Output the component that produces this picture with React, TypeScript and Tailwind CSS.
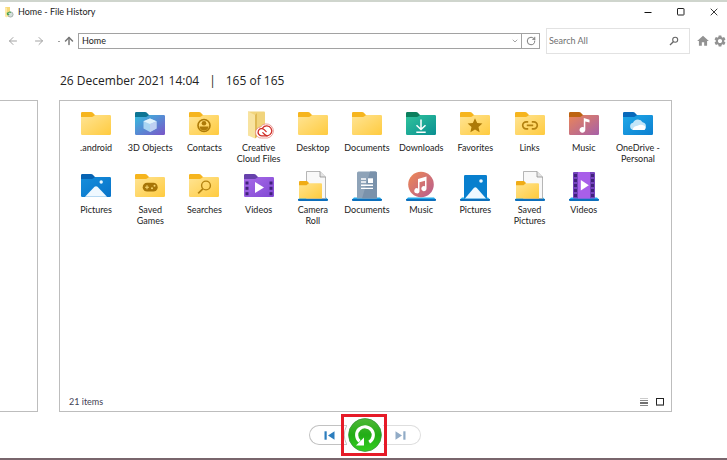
import type { ReactNode } from 'react'
import { ArrowLeft, ArrowRight, ArrowUp, ChevronDown, RotateCw } from 'lucide-react';
import { MdHome, MdSettings } from 'react-icons/md';

type HistoryItem = {
  label: string;
  icon: ReactNode;
}

type FolderProps = {
  tab?: string;
  from?: string;
  to?: string;
  id: string;
  children?: ReactNode;
}

const Folder = (props: FolderProps) => {
  const { id, tab = '#f6b51e', from = '#ffe494', to = '#ffcb3f', children } = props

  return (
    <svg viewBox="0 0 32 32" className="h-8 w-8" aria-hidden="true">
      <defs>
        <linearGradient id={id} x1="0" y1="0" x2="1" y2="1">
          <stop offset="0" stopColor={from} />
          <stop offset="1" stopColor={to} />
        </linearGradient>
      </defs>
      <path d="M1 13V5.2Q1 4 2.2 4H11.2Q12 4 12.6 4.6L15 7H30V13Z" fill={tab} />
      <path d="M1 9H11.8Q12.8 9 13.5 8.2L14.4 7.4Q15 7 15.8 7H29.8Q31 7 31 8.2V25.8Q31 27 29.8 27H2.2Q1 27 1 25.8Z" fill={`url(#${id})`} />
      {children}
    </svg>
  )
}

const LibraryBase = ({ children }: { children: ReactNode }) => (
  <svg viewBox="0 0 32 32" className="h-8 w-8" aria-hidden="true">
    <path d="M3 27.5H29L31 29.5H1Z" fill="#22a7e8" />
    <path d="M1 29H31V30.2Q31 31 30 31H2Q1 31 1 30.2Z" fill="#0d6fbc" />
    {children}
  </svg>
)

const PaperFolder = ({ id }: { id: string }) => (
  <LibraryBase>
    <defs>
      <linearGradient id={id} x1="0" y1="0" x2="1" y2="1">
        <stop offset="0" stopColor="#ffe48f" />
        <stop offset="1" stopColor="#ffca3d" />
      </linearGradient>
    </defs>
    <path d="M9.5 1.5H23L28.5 7V28.5H9.5Z" fill="#f8f8f8" stroke="#a5a5a5" strokeWidth="0.8" />
    <path d="M23 1.5V7H28.5" fill="#e4e4e4" stroke="#8d8d8d" strokeWidth="0.8" />
    <path d="M2 17V12Q2 11 3 11H10L12 13V17Z" fill="#f0ac16" />
    <path d="M2 15.2H9.5L11.8 13.2H24Q25 13.2 25 14.2V28.5H2Z" fill={`url(#${id})`} />
  </LibraryBase>
)

const FilmHoles = ({ left, right, rows }: { left: number; right: number; rows: number[] }) => (
  <g fill="#41227c">
    {rows.map((y) => (
      <g key={y}>
        <rect x={left} y={y} width="3" height="3" />
        <rect x={right} y={y} width="3" height="3" />
      </g>
    ))}
  </g>
)

const items: HistoryItem[] = [
  { label: '.android', icon: <Folder id="android" /> },
  {
    label: '3D Objects',
    icon: (
      <Folder id="objects" tab="#0d7594" from="#35bfdf" to="#7a55c8">
        <path d="M16 10.5L22.5 13.2V20.5L16 24L9.5 20.5V13.2Z" fill="#a9d5f2" />
        <path d="M16 10.5L22.5 13.2L16 16L9.5 13.2Z" fill="#e2f3fc" />
        <path d="M16 16L22.5 13.2V20.5L16 24Z" fill="#bfd0f2" />
      </Folder>
    ),
  },
  {
    label: 'Contacts',
    icon: (
      <Folder id="contacts">
        <circle cx="16" cy="17.5" r="6" fill="none" stroke="#ad7a08" strokeWidth="1.6" />
        <circle cx="16" cy="15.3" r="2.3" fill="#ad7a08" />
        <path d="M11.5 18.5H20.5Q20 22.5 16 22.5Q12 22.5 11.5 18.5Z" fill="#ad7a08" />
      </Folder>
    ),
  },
  {
    label: 'Creative\nCloud Files',
    icon: (
      <svg viewBox="0 0 32 32" className="h-8 w-8" aria-hidden="true">
        <path d="M5 3.5H21Q22 3.5 22 4.5V28H7L5 27Z" fill="#f1d47c" />
        <path d="M5 3.5L12 7V30.5L5 27.5Z" fill="#f8e3a0" />
        <path d="M12 7L14 5V29L12 30.5Z" fill="#dfb954" />
        <path d="M19.5 17A7.1 7.1 0 1 1 24.5 30H18.5A5.4 5.4 0 0 1 17.6 19Q18.4 18 19.5 17Z" fill="#fff" stroke="#e9877f" strokeWidth="0.8" />
        <path d="M24 27.8H18.6A3.6 3.6 0 1 1 21.2 21.6L23.2 23.6" fill="none" stroke="#cf2b25" strokeWidth="1.3" strokeLinecap="round" />
        <path d="M19.6 20A5 5 0 1 1 24.4 27.8Q22.8 27.6 21.7 26.5L19.8 24.6" fill="none" stroke="#cf2b25" strokeWidth="1.3" strokeLinecap="round" />
      </svg>
    ),
  },
  { label: 'Desktop', icon: <Folder id="desktop" /> },
  { label: 'Documents', icon: <Folder id="documents" /> },
  {
    label: 'Downloads',
    icon: (
      <Folder id="downloads" tab="#0b7f5d" from="#30c49c" to="#0a8f91">
        <path d="M16 11.5V21.5M11.5 17.2L16 21.5L20.5 17.2M11.3 24.2H20.7" fill="none" stroke="#fff" strokeWidth="1.5" />
      </Folder>
    ),
  },
  {
    label: 'Favorites',
    icon: (
      <Folder id="favorites">
        <path d="M16 10.3L18.2 15L23.4 15.6L19.5 19.1L20.6 24.2L16 21.6L11.4 24.2L12.5 19.1L8.6 15.6L13.8 15Z" fill="#ad7a08" />
      </Folder>
    ),
  },
  {
    label: 'Links',
    icon: (
      <Folder id="links">
        <path d="M14.2 13.8H12.2A3.5 3.5 0 0 0 12.2 20.8H14.2M17.8 13.8H19.8A3.5 3.5 0 0 1 19.8 20.8H17.8M12.8 17.3H19.2" fill="none" stroke="#b48210" strokeWidth="1.7" />
      </Folder>
    ),
  },
  {
    label: 'Music',
    icon: (
      <Folder id="music" tab="#bd6310" from="#ea8558" to="#a660a8">
        <path d="M15.8 10L21.5 11.8V14.5L17.3 13.4V21.8A2.9 2.9 0 1 1 15.8 19.3Z" fill="#fff" />
      </Folder>
    ),
  },
  {
    label: 'OneDrive -\nPersonal',
    icon: (
      <Folder id="onedrive" tab="#0869bb" from="#20a9e8" to="#0c7fd0">
        <path d="M11.5 22A3.7 3.7 0 0 1 11 14.7A5.3 5.3 0 0 1 20.6 14.2A4 4 0 0 1 21 22Z" fill="#c3e5f8" />
        <path d="M10.5 22Q11 18.3 15.5 17.7Q19 15.6 22.3 17.8Q24.6 20 22.5 22Z" fill="#fff" />
      </Folder>
    ),
  },
  {
    label: 'Pictures',
    icon: (
      <Folder id="pictures" tab="#0763b2" from="#168edb" to="#0873c9">
        <path d="M5 26.8L14.5 16.8Q16 15.5 17.5 16.8L27 26.8Z" fill="#eff8ff" />
        <circle cx="21.2" cy="12" r="1.7" fill="#e7f6ff" />
      </Folder>
    ),
  },
  {
    label: 'Saved\nGames',
    icon: (
      <Folder id="games">
        <rect x="8.7" y="12.8" width="15" height="8.8" rx="4.4" fill="#a77507" />
        <path d="M11 17.2H15M13 15.2V19.2" stroke="#f7d56e" strokeWidth="1.1" />
        <circle cx="18" cy="18.3" r="1" fill="#f7d56e" />
        <circle cx="20.5" cy="15.8" r="1" fill="#f7d56e" />
      </Folder>
    ),
  },
  {
    label: 'Searches',
    icon: (
      <Folder id="searches">
        <circle cx="18" cy="15.5" r="4.4" fill="none" stroke="#b48210" strokeWidth="1.4" />
        <path d="M14.8 18.8L10.2 23.4" stroke="#b48210" strokeWidth="1.7" />
      </Folder>
    ),
  },
  {
    label: 'Videos',
    icon: (
      <Folder id="videos" tab="#6741ac" from="#a86ce8" to="#8148d4">
        <FilmHoles left={2.5} right={26.5} rows={[11.5, 16.8, 22.2]} />
        <path d="M12 12L21 17.5L12 23Z" fill="#fff" />
      </Folder>
    ),
  },
  { label: 'Camera\nRoll', icon: <PaperFolder id="camera" /> },
  {
    label: 'Documents',
    icon: (
      <LibraryBase>
        <path d="M6 28.5V3Q6 1.5 7.5 1.5H24.5Q26 1.5 26 3V28.5Z" fill="#8ea3b8" />
        <path d="M19 1.5H24.5Q26 1.5 26 3V28.5H11Z" fill="#7a92ab" />
        <path d="M10 9H15M10 12H15M10 15.2H22M10 18.4H22" stroke="#fff" strokeWidth="1.4" />
        <rect x="17" y="8.3" width="5" height="4.7" fill="#fff" />
      </LibraryBase>
    ),
  },
  {
    label: 'Music',
    icon: (
      <LibraryBase>
        <defs>
          <linearGradient id="disc" x1="0" y1="0" x2="1" y2="1">
            <stop offset="0" stopColor="#ef8953" />
            <stop offset="1" stopColor="#b65c91" />
          </linearGradient>
        </defs>
        <circle cx="16" cy="14.5" r="12.8" fill="url(#disc)" />
        <path d="M13 9L21.5 6.5V18.5A2.6 2.6 0 1 1 20 16.3V10.7L14.5 12.2V20.7A2.6 2.6 0 1 1 13 18.4Z" fill="#fff" />
      </LibraryBase>
    ),
  },
  {
    label: 'Pictures',
    icon: (
      <LibraryBase>
        <path d="M5 28.5V6.3Q5 5 6.3 5H26.7Q28 5 28 6.3V28.5Z" fill="#087fce" />
        <path d="M6 28.5L14.8 18Q16.3 16.7 17.8 18L27 28.5Z" fill="#eef8ff" />
        <circle cx="22" cy="11" r="1.8" fill="#e9f7ff" />
      </LibraryBase>
    ),
  },
  { label: 'Saved\nPictures', icon: <PaperFolder id="saved" /> },
  {
    label: 'Videos',
    icon: (
      <LibraryBase>
        <rect x="5" y="2" width="22" height="26.5" rx="1" fill="#7543bd" />
        <rect x="10" y="2" width="12" height="26.5" fill="#a85fe9" />
        <FilmHoles left={6} right={23} rows={[4, 9, 14, 19, 24]} />
        <path d="M12.8 10L20.8 15.2L12.8 20.4Z" fill="#fff" />
      </LibraryBase>
    ),
  },
]

const TitleBar = () => (
  <header className="flex h-5 items-center justify-between pr-px pl-1">
    <div className="flex items-center gap-1">
      <svg viewBox="0 0 10 12" className="h-3 w-[10px]" aria-hidden="true">
        <path d="M1 1H6V11L1 10Z" fill="#f7d978" />
        <path d="M1 1L3 2V11.5L1 10.5Z" fill="#ffeaa5" />
        <circle cx="6.5" cy="8.5" r="2.6" fill="#d6e0dc" stroke="#8e9c98" strokeWidth="0.7" />
        <path d="M3.5 8.2A2.6 2.6 0 0 1 7 6.4M3.3 6.4V8.5H5.3" fill="none" stroke="#35a347" strokeWidth="0.9" />
      </svg>
      <h1 className="text-[9px] leading-3">Home - File History</h1>
    </div>
    <div className="flex gap-[9px]">
      <button type="button" aria-label="Minimize" className="flex h-5 w-6 items-center justify-center">
        <svg viewBox="0 0 8 8" className="h-2 w-2"><path d="M0.5 4.5H7.5" stroke="#111" /></svg>
      </button>
      <button type="button" aria-label="Maximize" className="flex h-5 w-6 items-center justify-center">
        <svg viewBox="0 0 8 8" className="h-2 w-2"><rect x="0.5" y="0.5" width="6.5" height="6.5" rx="0.5" fill="none" stroke="#222" /></svg>
      </button>
      <button type="button" aria-label="Close" className="flex h-5 w-6 items-center justify-center">
        <svg viewBox="0 0 8 8" className="h-2 w-2"><path d="M0.7 0.7L7.3 7.3M7.3 0.7L0.7 7.3" stroke="#222" strokeWidth="0.9" /></svg>
      </button>
    </div>
  </header>
)

const Toolbar = () => (
  <nav className="flex h-[38px] items-center pl-[7px]">
    <button type="button" aria-label="Back" className="mr-[14px] text-[#a3a3a3]">
      <ArrowLeft className="h-3 w-3" strokeWidth={2} />
    </button>
    <button type="button" aria-label="Forward" className="text-[#a3a3a3]">
      <ArrowRight className="h-3 w-3" strokeWidth={2} />
    </button>
    <span className="mr-[3px] ml-[13px] h-px w-[2px] bg-[#a0a0a0]" />
    <button type="button" aria-label="Up" className="mr-[3px] text-[#777]">
      <ArrowUp className="h-3 w-3" strokeWidth={3} />
    </button>
    <div className="flex h-4 flex-1 border border-[#a2a2a2]">
      <input aria-label="Address" defaultValue="Home" className="min-w-0 flex-1 px-[3px] text-[9px] leading-3 outline-none" />
      <button type="button" aria-label="Previous locations" className="flex w-3 items-center justify-center text-[#777]">
        <ChevronDown className="h-2 w-2" />
      </button>
      <button type="button" aria-label="Refresh" className="flex w-[18px] items-center justify-center border-l border-[#a2a2a2] text-[#666]">
        <RotateCw className="h-[10px] w-[10px]" />
      </button>
    </div>
    <div className="mx-[6px] flex h-[26px] w-36 items-center border border-[#e2e2e2] pr-[10px]">
      <input aria-label="Search" placeholder="Search All" className="min-w-0 flex-1 px-[2px] text-[9px] leading-3 outline-none placeholder:text-[#707070]" />
      <button type="button" aria-label="Search">
        <svg viewBox="0 0 10 10" className="h-[10px] w-[10px]">
          <circle cx="6.2" cy="3.8" r="2.5" fill="none" stroke="#666" strokeWidth="1.1" />
          <path d="M4.3 5.7L1 9" stroke="#666" strokeWidth="1.3" />
        </svg>
      </button>
    </div>
    <button type="button" aria-label="Home" className="mr-[3px] text-[#929292]">
      <MdHome className="h-[14px] w-[14px]" />
    </button>
    <button type="button" aria-label="Settings" className="text-[#929292]">
      <MdSettings className="h-[14px] w-[14px]" />
    </button>
  </nav>
)

const PlaybackControls = () => (
  <footer className="flex h-[46px] items-center justify-center pl-[3px]">
    <div className="relative flex items-center gap-px">
      <button type="button" aria-label="Previous version" className="flex h-5 w-[38px] items-center justify-between rounded-l-full border border-r-0 border-[#c2c2c2] pl-[14px]">
        <svg viewBox="0 0 11 9" className="h-[9px] w-[11px]" fill="#2c7dbd">
          <rect x="0.5" y="0.3" width="2.2" height="8.4" />
          <path d="M10.5 0.3V8.7L4 4.5Z" />
        </svg>
        <svg viewBox="0 0 4 18" className="h-[18px] w-1"><path d="M3.5 0Q-1 9 3.5 18" fill="none" stroke="#c2c2c2" /></svg>
      </button>
      <button type="button" aria-label="Restore" className="rounded-full">
        <svg viewBox="0 0 34 34" className="h-[34px] w-[34px]">
          <defs>
            <linearGradient id="restore" x1="0" y1="0" x2="0" y2="1">
              <stop offset="0" stopColor="#4fb837" />
              <stop offset="0.5" stopColor="#22ad16" />
              <stop offset="1" stopColor="#35cf20" />
            </linearGradient>
          </defs>
          <circle cx="17" cy="17" r="16.4" fill="url(#restore)" stroke="#35933a" strokeWidth="0.8" />
          <path d="M21.2 24.2A8.3 8.3 0 1 0 11.6 23.4" fill="none" stroke="#fff" strokeWidth="3.2" />
          <path d="M16 19.5V27.5H8Z" fill="#fff" />
        </svg>
      </button>
      <button type="button" aria-label="Next version" className="flex h-5 w-[38px] items-center rounded-r-full border border-l-0 border-[#dedede] pl-3">
        <svg viewBox="0 0 11 9" className="h-[9px] w-[11px]" fill="#91abc6">
          <path d="M0.5 0.3V8.7L7 4.5Z" />
          <rect x="8.3" y="0.3" width="2.2" height="8.4" />
        </svg>
      </button>
      <div className="pointer-events-none absolute -inset-y-1 right-[34px] left-8 border-[3px] border-[#e61b28]" />
    </div>
  </footer>
)

const App = () => {
  return (
    <div className="flex min-h-screen flex-col border-t-2 border-b-2 border-t-[#cfd5cd] border-b-[#79656c] bg-white font-[Lato,'Open_Sans',sans-serif] text-[#222]">
      <TitleBar />
      <Toolbar />
      <h2 className="flex h-10 items-center gap-[10px] pt-[2px] pl-[60px] font-['Open_Sans','Noto_Sans',sans-serif] text-[12px] leading-4">
        <span>26 December 2021 14:04</span>
        <span>|</span>
        <span>165 of 165</span>
      </h2>
      <main className="flex flex-1 gap-[21px] pr-[55px]">
        <aside aria-label="Previous version" className="w-[38px] border border-l-0 border-[#bdbdbd]" />
        <section className="flex flex-1 flex-col border border-[#bdbdbd]">
          <ul className="grid grid-cols-11 gap-y-[6px] pt-[7px] pr-[6px] pl-[9px]">
            {items.map((item, index) => (
              <li key={index}>
                <button type="button" className="flex min-h-14 w-full flex-col items-center gap-[2px] text-center text-[9px] leading-[11px]">
                  {item.icon}
                  <span className="whitespace-pre-line">{item.label}</span>
                </button>
              </li>
            ))}
          </ul>
          <div className="mt-auto flex items-center justify-between pr-[6px] pb-[3px] pl-[9px]">
            <span className="text-[9px] leading-3 text-[#3f4254]">21 items</span>
            <div className="flex gap-[6px]">
              <button type="button" aria-label="Details view">
                <svg viewBox="0 0 10 10" className="h-[10px] w-[10px]">
                  <path d="M1 1.5H9" stroke="#ccc" />
                  <path d="M1 3.5H9M1 8.5H9" stroke="#888" />
                  <path d="M1 6H9" stroke="#111" strokeWidth="1.2" />
                </svg>
              </button>
              <button type="button" aria-label="Large icons view">
                <svg viewBox="0 0 10 10" className="h-[10px] w-[10px]">
                  <rect x="1.5" y="1.5" width="7" height="6.5" fill="none" stroke="#222" />
                  <path d="M1 8.3H9" stroke="#777" />
                </svg>
              </button>
            </div>
          </div>
        </section>
      </main>
      <PlaybackControls />
    </div>
  )
}

export default App
